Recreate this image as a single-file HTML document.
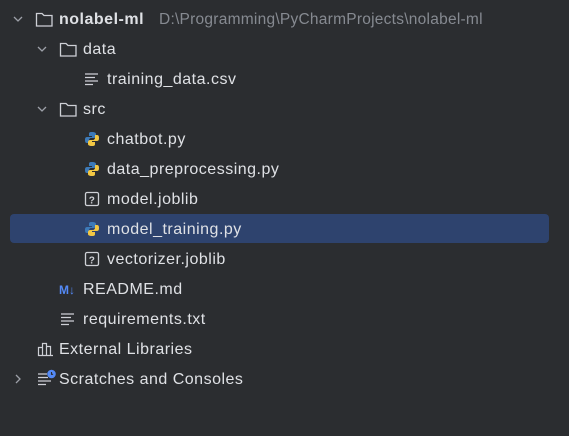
<!DOCTYPE html>
<html><head><style>
body{margin:0;width:569px;height:436px;background:#2b2d30;font-family:"Liberation Sans",sans-serif;font-size:16px;letter-spacing:0.5px;color:#dfe1e5;position:relative;overflow:hidden}
.r{position:absolute;left:0;height:30px;line-height:30px;white-space:nowrap}
.sel{position:absolute;left:10px;top:214px;width:539px;height:29px;background:#2e436e;border-radius:4px}
svg{position:absolute}
.t{position:absolute;top:1px}
</style></head><body>
<div class="sel"></div>
<div class="r" style="top:4px;width:569px">
<svg style="left:13px;top:10px" width="10" height="10"><path d="M1 3l4 4 4-4" stroke="#9da0a8" stroke-width="1.3" fill="none"/></svg>
<svg style="left:35px;top:7px" width="19" height="17"><path d="M1.5 2.5h5.5l2 2h8v10.5h-15.5z" stroke="#ced0d6" stroke-width="1.3" fill="none"/></svg>
<span class="t" style="left:59px;font-weight:bold">nolabel-ml</span>
<span class="t" style="left:159px;color:#868a91;font-size:15.5px;letter-spacing:0.25px">D:\Programming\PyCharmProjects\nolabel-ml</span>
</div>
<div class="r" style="top:34px">
<svg style="left:37px;top:10px" width="10" height="10"><path d="M1 3l4 4 4-4" stroke="#9da0a8" stroke-width="1.3" fill="none"/></svg>
<svg style="left:59px;top:7px" width="19" height="17"><path d="M1.5 2.5h5.5l2 2h8v10.5h-15.5z" stroke="#ced0d6" stroke-width="1.3" fill="none"/></svg>
<span class="t" style="left:83px">data</span></div>
<div class="r" style="top:64px">
<svg style="left:84px;top:8px" width="16" height="14"><path d="M1 2h13M1 5.5h10M1 9h13M1 12.5h8" stroke="#ced0d6" stroke-width="1.3"/></svg>
<span class="t" style="left:107px">training_data.csv</span></div>
<div class="r" style="top:94px">
<svg style="left:37px;top:10px" width="10" height="10"><path d="M1 3l4 4 4-4" stroke="#9da0a8" stroke-width="1.3" fill="none"/></svg>
<svg style="left:59px;top:7px" width="19" height="17"><path d="M1.5 2.5h5.5l2 2h8v10.5h-15.5z" stroke="#ced0d6" stroke-width="1.3" fill="none"/></svg>
<span class="t" style="left:83px">src</span></div>
<div class="r" style="top:124px"><svg style="left:84px;top:7px" width="16" height="16"><path d="M8 1c-3 0-3 1-3 2v2h3v1H3c-2 0-2 2-2 3s0 3 2 3h2V9c0-1 1-2 2-2h3c1 0 2-1 2-2V3c0-1-1-2-4-2z" fill="#3d7ab8"/><path d="M8 15c3 0 3-1 3-2v-2H8v-1h5c2 0 2-2 2-3s0-3-2-3h-2v3c0 1-1 2-2 2H6c-1 0-2 1-2 2v2c0 1 1 2 4 2z" fill="#f2c744"/></svg><span class="t" style="left:107px">chatbot.py</span></div>
<div class="r" style="top:154px"><svg style="left:84px;top:7px" width="16" height="16"><path d="M8 1c-3 0-3 1-3 2v2h3v1H3c-2 0-2 2-2 3s0 3 2 3h2V9c0-1 1-2 2-2h3c1 0 2-1 2-2V3c0-1-1-2-4-2z" fill="#3d7ab8"/><path d="M8 15c3 0 3-1 3-2v-2H8v-1h5c2 0 2-2 2-3s0-3-2-3h-2v3c0 1-1 2-2 2H6c-1 0-2 1-2 2v2c0 1 1 2 4 2z" fill="#f2c744"/></svg><span class="t" style="left:107px">data_preprocessing.py</span></div>
<div class="r" style="top:184px"><svg style="left:84px;top:7px" width="16" height="16"><rect x="1.5" y="1.5" width="13" height="13" rx="1.5" stroke="#ced0d6" stroke-width="1.3" fill="none"/><text x="8" y="12.5" font-size="10" font-weight="bold" text-anchor="middle" fill="#ced0d6" font-family="Liberation Sans">?</text></svg><span class="t" style="left:107px">model.joblib</span></div>
<div class="r" style="top:214px"><svg style="left:84px;top:7px" width="16" height="16"><path d="M8 1c-3 0-3 1-3 2v2h3v1H3c-2 0-2 2-2 3s0 3 2 3h2V9c0-1 1-2 2-2h3c1 0 2-1 2-2V3c0-1-1-2-4-2z" fill="#3d7ab8"/><path d="M8 15c3 0 3-1 3-2v-2H8v-1h5c2 0 2-2 2-3s0-3-2-3h-2v3c0 1-1 2-2 2H6c-1 0-2 1-2 2v2c0 1 1 2 4 2z" fill="#f2c744"/></svg><span class="t" style="left:107px">model_training.py</span></div>
<div class="r" style="top:244px"><svg style="left:84px;top:7px" width="16" height="16"><rect x="1.5" y="1.5" width="13" height="13" rx="1.5" stroke="#ced0d6" stroke-width="1.3" fill="none"/><text x="8" y="12.5" font-size="10" font-weight="bold" text-anchor="middle" fill="#ced0d6" font-family="Liberation Sans">?</text></svg><span class="t" style="left:107px">vectorizer.joblib</span></div>
<div class="r" style="top:274px"><span class="t" style="left:59px;font-size:12px;font-weight:bold;color:#548af7;letter-spacing:0">M↓</span><span class="t" style="left:83px">README.md</span></div>
<div class="r" style="top:304px"><svg style="left:60px;top:8px" width="16" height="14"><path d="M1 2h13M1 5.5h10M1 9h13M1 12.5h8" stroke="#ced0d6" stroke-width="1.3"/></svg><span class="t" style="left:83px">requirements.txt</span></div>
<div class="r" style="top:334px"><svg style="left:37px;top:7px" width="18" height="16"><path d="M1.5 6.5h4v8h-4zM5.5 2.5h4v12h-4zM9.5 5.5h4v9h-4zM1 14.5h15" stroke="#ced0d6" stroke-width="1.2" fill="none"/></svg><span class="t" style="left:59px">External Libraries</span></div>
<div class="r" style="top:364px"><svg style="left:13px;top:10px" width="10" height="10"><path d="M3 1l4 4-4 4" stroke="#9da0a8" stroke-width="1.3" fill="none"/></svg><svg style="left:37px;top:5px" width="20" height="18"><path d="M1 5h9M1 8.5h10M1 12h13M1 15.5h8" stroke="#ced0d6" stroke-width="1.3"/><circle cx="14.5" cy="5" r="4.3" fill="#548af7"/><path d="M14.5 3v2.3h1.6" stroke="#2b2d30" stroke-width="1.1" fill="none"/></svg><span class="t" style="left:59px">Scratches and Consoles</span></div>
</body></html>
